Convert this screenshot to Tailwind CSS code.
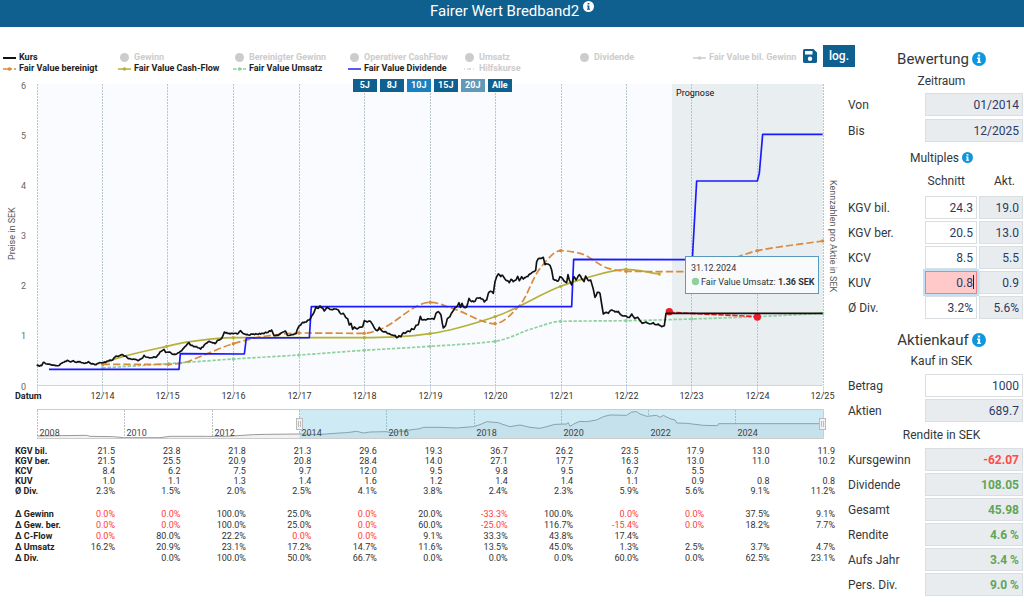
<!DOCTYPE html>
<html lang="de">
<head>
<meta charset="utf-8">
<title>Fairer Wert Bredband2</title>
<script src="https://cdn.jsdelivr.net/npm/@tailwindcss/browser@4"></script>
</head>
<body class="bg-white font-[Roboto,sans-serif] text-[#33373b]">
<svg class="hidden">
  <symbol id="info" viewBox="0 0 16 16"><circle cx="8" cy="8" r="8" fill="currentColor"/></symbol>
  <symbol id="i" viewBox="0 0 16 16"><path d="M6.7 2.8h2.6v2.4H6.7zM5.8 6.4h3.5v4.8h1v1.5H5.8v-1.5h1V7.9h-1z"/></symbol>
</svg>

<header class="flex h-[27px] justify-center gap-1 bg-[#10608f] text-white">
  <h1 class="text-[15px] leading-[23px]">Fairer Wert Bredband2</h1>
  <button type="button" aria-label="Info" class="h-3 text-white"><svg class="size-[11px]"><use href="#info"/><use href="#i" fill="#10608f"/></svg></button>
</header>

<div class="flex">
  <main class="min-w-0 flex-1 pr-2">
    <div class="flex h-[53px] items-start pt-[18px]">
      <div class="grid min-w-0 flex-1 grid-cols-[repeat(7,115px)] gap-x-0 pt-[7px] pl-[3px] text-[9px] leading-[11px] font-bold whitespace-nowrap text-[#222]">
        <button type="button" class="flex items-center gap-[3px]"><svg width="13" height="8"><path d="M0 4H13" stroke="#111" stroke-width="2"/></svg>Kurs</button>
        <button type="button" class="flex items-center gap-[3px] text-[#ccc]"><svg width="13" height="9"><circle cx="6.500" cy="4.500" r="4.500" fill="#ccc"/></svg>Gewinn</button>
        <button type="button" class="flex items-center gap-[3px] text-[#ccc]"><svg width="13" height="9"><circle cx="6.500" cy="4.500" r="4.500" fill="#ccc"/></svg>Bereinigter Gewinn</button>
        <button type="button" class="flex items-center gap-[3px] text-[#ccc]"><svg width="13" height="9"><circle cx="6.500" cy="4.500" r="4.500" fill="#ccc"/></svg>Operativer CashFlow</button>
        <button type="button" class="flex items-center gap-[3px] text-[#ccc]"><svg width="13" height="9"><circle cx="6.500" cy="4.500" r="4.500" fill="#ccc"/></svg>Umsatz</button>
        <button type="button" class="flex items-center gap-[3px] text-[#ccc]"><svg width="13" height="9"><circle cx="6.500" cy="4.500" r="4.500" fill="#ccc"/></svg>Dividende</button>
        <button type="button" class="flex items-center gap-[3px] text-[#ccc]"><svg width="13" height="8"><path d="M0 4H13" stroke="#ccc" stroke-width="1.500"/><circle cx="6.500" cy="4" r="1.800" fill="#ccc"/></svg>Fair Value bil. Gewinn</button>
        <button type="button" class="flex items-center gap-[3px]"><svg width="13" height="8"><path d="M0 4H9M11 4h2" stroke="#d98a3d" stroke-width="1.500"/><circle cx="6.500" cy="4" r="1.800" fill="#d98a3d"/></svg>Fair Value bereinigt</button>
        <button type="button" class="flex items-center gap-[3px]"><svg width="13" height="8"><path d="M0 4H13" stroke="#b5b135" stroke-width="1.500"/><circle cx="6.500" cy="4" r="1.800" fill="#b5b135"/></svg>Fair Value Cash-Flow</button>
        <button type="button" class="flex items-center gap-[3px]"><svg width="13" height="8"><path d="M0 4H3.500M5 4h4M10 4h3" stroke="#8fd09c" stroke-width="1.500"/><circle cx="6.500" cy="4" r="1.800" fill="#8fd09c"/></svg>Fair Value Umsatz</button>
        <button type="button" class="flex items-center gap-[3px]"><svg width="13" height="8"><path d="M0 4H13" stroke="#2222f0" stroke-width="1.500"/></svg>Fair Value Dividende</button>
        <button type="button" class="flex items-center gap-[3px] text-[#ccc]"><svg width="13" height="8"><path d="M1 4H13" stroke="#ccc" stroke-dasharray="1 2"/><circle cx="6.500" cy="4" r="1" fill="#ccc"/></svg>Hilfskurse</button>
      </div>
      <div class="-mr-[15px] flex items-center gap-[6px]">
        <button type="button" aria-label="Speichern"><svg class="size-[14px]" viewBox="0 0 14 14"><path fill="#10608f" fill-rule="evenodd" d="M1.500 0h9L14 3.500v9a1.500 1.500 0 0 1-1.500 1.500h-11A1.500 1.500 0 0 1 0 12.500v-11A1.500 1.500 0 0 1 1.500 0zM2 2v3.500h7.500V2zM7 7.500a2.200 2.200 0 1 0 0 4.400 2.200 2.200 0 0 0 0-4.400z"/></svg></button>
        <button type="button" class="h-[22px] w-8 bg-[#10608f] text-[12px] font-medium text-white">log.</button>
      </div>
    </div>

    <div class="relative">
      <div class="absolute -top-px left-[42%] flex gap-[3px] text-[9px] leading-[13px] font-bold text-white">
        <button type="button" class="w-6 bg-[#10608f]">5J</button>
        <button type="button" class="w-6 bg-[#10608f]">8J</button>
        <button type="button" class="w-6 bg-[#1a80bf]">10J</button>
        <button type="button" class="w-6 bg-[#10608f]">15J</button>
        <button type="button" class="w-6 bg-[#6399b8]">20J</button>
        <button type="button" class="w-6 bg-[#10608f]">Alle</button>
      </div>
      <svg class="block w-full" viewBox="0 80 840 360" font-size="9" fill="#444">
        <rect x="37" y="84" width="635" height="302" fill="#f9fbff"/>
        <rect x="672" y="84" width="151" height="302" fill="#e9eef1"/>
        <g id="grid" stroke="#b9c6c9" stroke-dasharray="2 1"></g>
        <path id="ticks" stroke="#ccd6eb" fill="none" d="M37 385.500H823"/>
        <g text-anchor="end" fill="#666">
          <text x="26" y="89">6</text><text x="26" y="139">5</text><text x="26" y="189">4</text><text x="26" y="239">3</text><text x="26" y="289">2</text><text x="26" y="339">1</text><text x="26" y="390">0</text>
        </g>
        <text x="15" y="399" font-weight="700" fill="#222">Datum</text>
        <g id="dates" text-anchor="middle" fill="#333"></g>
        <text transform="translate(15 260) rotate(-90)" fill="#555">Preise in SEK</text>
        <text transform="translate(830 180) rotate(90)" fill="#555">Kennzahlen pro Aktie in SEK</text>
        <text x="676" y="96" fill="#111">Prognose</text>
        <g id="series" transform="translate(0 230) scale(.33333)" fill="none" stroke-linejoin="round"></g>
        <rect x="685.500" y="256.500" width="133" height="37" fill="#f8fafc" stroke="#5b9bbd"/>
        <text x="691" y="271" fill="#333">31.12.2024</text>
        <circle cx="695.500" cy="281.500" r="3.700" fill="#8fd09c"/>
        <text x="701" y="285" fill="#333">Fair Value Umsatz: <tspan font-weight="700">1.36 SEK</tspan></text>

        <g id="navlines" stroke="#bbc3c6" stroke-dasharray="2 1"></g>
        <g transform="translate(0 400) scale(.33333)"><path id="navArea" fill="#f2f2f2" stroke="none"/><path id="navLine" fill="none" stroke="#999" stroke-width="3"/></g>
        <rect x="299.500" y="409.500" width="524" height="29" fill="#58b9df" fill-opacity=".3"/>
        <path d="M37 409.500H823.500V438.500H37" fill="none" stroke="#ccc"/>
        <g id="years" fill="#444"></g>
        <g fill="#f2f2f2" stroke="#bbb"><rect x="296.500" y="418.500" width="6" height="11"/><path d="M298.500 421v6M300.500 421v6"/><rect x="819.500" y="418.500" width="6" height="11"/><path d="M821.500 421v6M823.500 421v6"/></g>
      </svg>
    </div>

    <div class="pt-[6px] pr-[5px]">
      <table class="w-full table-fixed border-collapse text-right text-[9px] text-[#333] [&_th]:pl-[15px] [&_th]:text-left [&_th]:font-bold [&_th]:whitespace-nowrap [&_th]:text-[#222]">
        <colgroup><col class="w-[60px]"><col class="w-[55px]"><col span="11"></colgroup>
        <tbody id="multiples" class="leading-[10px]"></tbody>
        <tbody><tr><td colspan="13" class="h-[13px]"></td></tr></tbody>
        <tbody id="changes" class="leading-[11px]"></tbody>
      </table>
    </div>
  </main>

  <aside class="w-44 pt-5 pr-px text-[12px] leading-[16px] text-[#33373b] [&_input]:h-[23px] [&_input]:w-full [&_input]:min-w-0 [&_input]:border [&_input]:border-[#d9dee3] [&_input]:text-right [&_input]:outline-none [&_h2]:pl-3 [&_h3]:pl-3">
    <h2 class="flex h-6 items-center justify-center gap-[3px] text-[15px]">Bewertung <button type="button" aria-label="Info Bewertung" class="text-[#0f97dc]"><svg class="size-[14px]"><use href="#info"/><use href="#i" fill="#fff"/></svg></button></h2>
    <h3 class="h-[22px] pt-[2px] text-center">Zeitraum</h3>
    <div class="grid grid-cols-[77px_1fr] items-center gap-y-[3px] [&_input]:bg-[#e9ecef] [&_input]:pr-[3px] [&_input]:text-[#2b3a63]">
      <label for="von">Von</label><input id="von" value="01/2014" readonly>
      <label for="bis">Bis</label><input id="bis" value="12/2025" readonly>
    </div>
    <h3 class="flex h-[31px] items-center justify-center gap-[3px]">Multiples <button type="button" aria-label="Info Multiples" class="text-[#0f97dc]"><svg class="size-[11px]"><use href="#info"/><use href="#i" fill="#fff"/></svg></button></h3>
    <div class="grid grid-cols-[77px_52px_1fr] items-center gap-y-[2px] [&_input]:pr-[3px] [&_input]:text-[#2b3a63]">
      <span></span><span class="h-[21px] pr-3 text-right">Schnitt</span><span class="h-[21px] pr-2 text-right">Akt.</span>
      <label for="kgvbil">KGV bil.</label><input id="kgvbil" value="24.3"><div class="pl-[2px]"><input aria-label="KGV bil. aktuell" class="bg-[#e9ecef]" value="19.0" readonly></div>
      <label for="kgvber">KGV ber.</label><input id="kgvber" value="20.5"><div class="pl-[2px]"><input aria-label="KGV ber. aktuell" class="bg-[#e9ecef]" value="13.0" readonly></div>
      <label for="kcv">KCV</label><input id="kcv" value="8.5"><div class="pl-[2px]"><input aria-label="KCV aktuell" class="bg-[#e9ecef]" value="5.5" readonly></div>
      <label for="kuv">KUV</label><div class="relative"><input id="kuv" class="border-[#f08080]! bg-[#ffc9c9] ring-2 ring-[#bfe3f5]" value="0.8"><span class="absolute top-1 right-[3px] h-[14px] w-px bg-[#222]"></span></div><div class="pl-[2px]"><input aria-label="KUV aktuell" class="bg-[#e9ecef]" value="0.9" readonly></div>
      <label for="div">Ø Div.</label><input id="div" value="3.2%"><div class="pl-[2px]"><input aria-label="Ø Div. aktuell" class="bg-[#e9ecef]" value="5.6%" readonly></div>
    </div>
    <h2 class="mt-2 flex h-[26px] items-center justify-center gap-[3px] text-[15px]">Aktienkauf <button type="button" aria-label="Info Aktienkauf" class="text-[#0f97dc]"><svg class="size-[14px]"><use href="#info"/><use href="#i" fill="#fff"/></svg></button></h2>
    <h3 class="h-[21px] text-center">Kauf in SEK</h3>
    <div class="grid grid-cols-[77px_1fr] items-center gap-y-[2px] [&_input]:pr-[3px] [&_input]:text-[#2b3a63]">
      <label for="betrag">Betrag</label><input id="betrag" value="1000">
      <label for="aktien">Aktien</label><input id="aktien" class="bg-[#e9ecef]" value="689.7" readonly>
    </div>
    <h3 class="flex h-[26px] items-center justify-center">Rendite in SEK</h3>
    <div class="grid grid-cols-[77px_1fr] items-center gap-y-[2px] [&_input]:bg-[#e9ecef] [&_input]:pr-[3px] [&_input]:font-bold [&_input]:text-[#5fa55a]">
      <label for="kg">Kursgewinn</label><input id="kg" class="text-[#ff4b4b]!" value="-62.07" readonly>
      <label for="dv">Dividende</label><input id="dv" value="108.05" readonly>
      <label for="gs">Gesamt</label><input id="gs" value="45.98" readonly>
      <label for="rd">Rendite</label><input id="rd" value="4.6 %" readonly>
      <label for="aj">Aufs Jahr</label><input id="aj" value="3.4 %" readonly>
      <label for="pd">Pers. Div.</label><input id="pd" value="9.0 %" readonly>
    </div>
  </aside>
</div>

<script>
const NS = 'http://www.w3.org/2000/svg';
const byId = id => document.getElementById(id);
function add(parent, tag, attrs, text) {
  const e = document.createElementNS(NS, tag);
  for (const k in attrs) e.setAttribute(k, attrs[k]);
  if (text) e.textContent = text;
  parent.appendChild(e);
  return e;
}
const pts = s => s.trim().split(/\s+/).map(p => p.split(',').map(Number));
const line = p => 'M' + p.map(q => q.join(' ')).join('L');
// Monotone cubic through the points, so flat stretches stay flat
function smooth(p) {
  const n = p.length, s = [], m = [];
  for (let i = 0; i < n - 1; i++) s.push((p[i+1][1] - p[i][1]) / (p[i+1][0] - p[i][0]));
  for (let i = 0; i < n; i++) {
    if (i === 0) m.push(s[0]);
    else if (i === n - 1) m.push(s[n-2]);
    else m.push(s[i-1] * s[i] <= 0 ? 0 : 2 * s[i-1] * s[i] / (s[i-1] + s[i]));
  }
  let d = 'M' + p[0];
  for (let i = 0; i < n - 1; i++) {
    const h = (p[i+1][0] - p[i][0]) / 3;
    d += `C${p[i][0]+h} ${p[i][1]+m[i]*h} ${p[i+1][0]-h} ${p[i+1][1]-m[i+1]*h} ${p[i+1]}`;
  }
  return d;
}
function noisy(p, end) {
  let seed = 7;
  const rnd = () => (seed = (seed * 16807) % 2147483647) / 2147483647 - .5;
  const out = [];
  for (let i = 0; i < p.length - 1; i++) {
    const [x, y] = p[i], [u, v] = p[i+1];
    out.push([x, y]);
    if (x >= end) continue;
    const n = Math.max(1, Math.round((u - x) / 4));
    for (let k = 1; k < n; k++) out.push([x + (u-x)*k/n, y + (v-y)*k/n + rnd()*4]);
  }
  out.push(p[p.length-1]);
  return out;
}

const gx = [37.5,102.5,167.5,233.5,299.5,364.5,430.5,495.5,561.5,626.5,691.5,757.5,823.5];
gx.forEach((x, i) => {
  add(byId('grid'), 'path', {d: `M${x} 84V385`});
  add(byId('grid'), 'path', {d: `M${x} 386v7`, stroke: '#ccd6eb', 'stroke-dasharray': 'none'});
  if (i) add(byId('dates'), 'text', {x: x - (i === 12 ? 1 : 0), y: 399}, '12/' + (13 + i));
});
['2008','2010','2012','2014','2016','2018','2020','2022','2024'].forEach((t, i) => {
  const x = Math.round(37 + i * 87.3) + .5;
  add(byId('navlines'), 'path', {d: `M${x} 410V438`});
  add(byId('years'), 'text', {x: x + 2, y: 436}, t);
});

const S = byId('series');
const green = pts('308,414 505,401 700,387 897,375 1093,361 1290,349 1485,334 1600,295 1682,274 1878,272 2075,267 2272,260 2468,250');
const olive = pts('308,402 350,385 500,349 570,335 700,323 1093,323 1200,320 1290,311 1485,260 1682,169 1745,148 1878,118 1978,132');
const orange = pts('308,403 505,403 550,398 600,380 700,341 800,318 897,309 1093,310 1140,298 1290,217 1360,236 1485,281 1560,225 1620,115 1682,62 1740,70 1825,115 1878,124 2075,125 2220,78 2272,62 2468,33');
add(S, 'path', {d: smooth(green), stroke: '#8fd09c', 'stroke-width': 5, 'stroke-dasharray': '10 5'});
add(S, 'path', {d: smooth(olive), stroke: '#b5b135', 'stroke-width': 5});
add(S, 'path', {d: smooth(orange), stroke: '#d98a3d', 'stroke-width': 5, 'stroke-dasharray': '22 9'});
const marks = [[green, '#8fd09c'], [olive, '#b5b135'], [orange, '#d98a3d']];
marks.forEach(([p, c]) => p.filter(q => gx.some(g => Math.abs(g * 3 - q[0]) < 6) || q[0] === 1978)
  .forEach(q => add(S, 'circle', {cx: q[0], cy: q[1], r: 5, fill: c})));
add(S, 'path', {d: line(pts('147,418 537,418 541,371 733,372 739,324 928,323 934,230 1715,230 1721,88 2077,89 2090,-147 2272,-147 2278,-170 2288,-287 2468,-287')), stroke: '#1a1aff', 'stroke-width': 5});
add(S, 'path', {d: 'M2008 247L2272 260', stroke: '#ee2222', 'stroke-width': 5, 'stroke-dasharray': '16 5'});
add(S, 'circle', {cx: 2008, cy: 245, r: 11, fill: '#ee1c25'});
add(S, 'circle', {cx: 2272, cy: 261, r: 11, fill: '#ee1c25'});
const kurs = pts(`110,407 125,407 130,397 140,402 150,403 165,406 175,407 185,400 195,394 205,392 212,396 220,392 230,397 240,395 255,400 265,395 270,399 285,404 295,400 310,398 320,394 330,390 338,390 348,378 355,379 365,374 375,378 385,386 400,387 415,392 428,384 432,376 437,381 450,384 470,380 480,366 492,358 497,367 510,366 520,373 530,372 545,362 555,350 562,342 567,338 573,346 585,350 602,357 612,346 625,335 635,337 645,341 652,331 665,325 673,306 680,308 690,312 700,311 712,312 722,302 730,311 745,315 760,312 775,313 785,310 800,308 815,300 822,317 835,316 848,307 856,303 862,316 875,314 888,311
895,292 905,280 915,276 928,270 935,258 943,245 948,230 955,235 960,228 968,234 973,243 980,232 990,238 1005,237 1015,240 1023,252 1030,250 1037,262 1043,266 1048,285 1053,280 1058,298 1063,291 1072,297 1080,291 1088,290 1093,272 1102,276 1110,273 1118,284 1123,294 1132,302 1138,292 1145,302 1155,305 1165,311 1175,315 1185,316 1190,323 1197,317 1203,320 1210,308 1215,310 1225,303 1230,305 1235,296 1242,298 1248,286 1255,284 1261,259 1265,269 1280,269 1295,266 1302,268 1308,250 1315,245 1323,255 1327,280 1330,294 1337,286 1342,266 1350,260 1357,246 1365,233 1372,228 1377,218 1381,232 1386,220 1392,232 1400,231 1407,205 1415,215 1425,214 1430,204 1440,203 1447,207 1453,216 1460,210 1465,190 1472,184 1480,190 1485,155 1490,140 1495,132 1502,140 1508,136 1515,147 1522,152 1528,158 1533,148 1540,155 1548,150 1553,139 1558,152 1565,140 1570,147 1580,140 1590,132 1598,126 1607,121 1610,95 1615,86 1625,85 1630,82 1635,104 1642,102 1650,106 1655,120 1660,148 1668,150 1675,153 1680,140 1688,146 1695,155 1700,158 1704,134 1708,150 1715,165
1722,140 1728,150 1738,134 1745,146 1752,155 1757,138 1765,152 1772,150 1780,178 1785,202 1792,187 1800,190 1805,222 1810,252 1818,247 1825,250 1835,240 1845,246 1855,244 1862,254 1870,258 1878,258 1888,262 1895,252 1905,266 1913,262 1920,272 1927,280 1938,276 1950,282 1960,278 1967,284 1975,282 1985,290 1993,287 1998,250 2005,250 2468,250`);
add(S, 'path', {d: line(noisy(kurs, 1998)), stroke: '#111', 'stroke-width': 5});

const nav = pts('112,108 180,107 260,106 270,109 340,110 370,113 480,113 510,109 620,109 680,109 760,104 800,103 900,102 950,104 1020,99 1040,98 1070,94 1090,99 1110,96 1160,95 1170,98 1200,95 1230,90 1260,86 1270,82 1320,82 1370,84 1420,80 1440,74 1460,65 1495,68 1505,72 1530,80 1560,75 1590,82 1620,85 1640,80 1665,73 1700,72 1705,68 1710,79 1725,70 1740,64 1760,65 1790,60 1810,50 1830,45 1880,46 1895,36 1910,35 1920,42 1940,49 1970,46 1980,52 1990,46 2010,56 2025,60 2030,69 2060,70 2110,76 2153,77 2156,71 2468,71');
byId('navLine').setAttribute('d', line(nav));
byId('navArea').setAttribute('d', line(nav) + 'L2468 115L112 115Z');

function fill(id, rows, red) {
  rows.forEach(([name, ...cells]) => {
    const tr = byId(id).insertRow();
    const th = document.createElement('th');
    th.scope = 'row'; th.textContent = name; tr.appendChild(th);
    cells.forEach(v => {
      const td = tr.insertCell();
      td.textContent = v;
      if (red(name, v)) td.className = 'text-[#ff3b3b]';
    });
  });
}
fill('multiples', [
  ['KGV bil.','21.5','23.8','21.8','21.3','29.6','19.3','36.7','26.2','23.5','17.9','13.0','11.9'],
  ['KGV ber.','21.5','25.5','20.9','20.8','28.4','14.0','27.1','17.7','16.3','13.0','11.0','10.2'],
  ['KCV','8.4','6.2','7.5','9.7','12.0','9.5','9.8','9.5','6.7','5.5','',''],
  ['KUV','1.0','1.1','1.3','1.4','1.6','1.2','1.4','1.4','1.1','0.9','0.8','0.8'],
  ['Ø Div.','2.3%','1.5%','2.0%','2.5%','4.1%','3.8%','2.4%','2.3%','5.9%','5.6%','9.1%','11.2%']
], () => false);
fill('changes', [
  ['Δ Gewinn','0.0%','0.0%','100.0%','25.0%','0.0%','20.0%','-33.3%','100.0%','0.0%','0.0%','37.5%','9.1%'],
  ['Δ Gew. ber.','0.0%','0.0%','100.0%','25.0%','0.0%','60.0%','-25.0%','116.7%','-15.4%','0.0%','18.2%','7.7%'],
  ['Δ C-Flow','0.0%','80.0%','22.2%','0.0%','0.0%','9.1%','33.3%','43.8%','17.4%','','',''],
  ['Δ Umsatz','16.2%','20.9%','23.1%','17.2%','14.7%','11.6%','13.5%','45.0%','1.3%','2.5%','3.7%','4.7%'],
  ['Δ Div.','','0.0%','100.0%','50.0%','66.7%','0.0%','0.0%','0.0%','60.0%','0.0%','62.5%','23.1%']
], (name, v) => name !== 'Δ Div.' && (v === '0.0%' || v[0] === '-'));
</script>
</body>
</html>
